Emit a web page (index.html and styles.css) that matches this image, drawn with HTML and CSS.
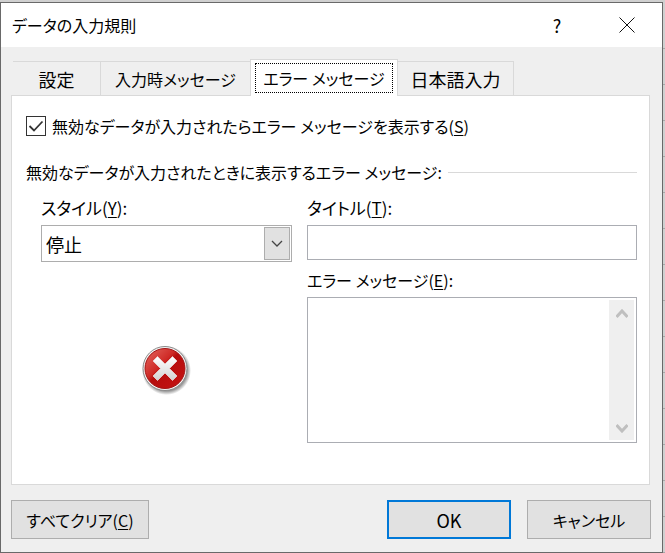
FILE: index.html
```html
<!DOCTYPE html>
<html lang="ja">
<head>
    <meta charset="UTF-8">
    <meta name="viewport" content="width=device-width, initial-scale=1.0">
    <title>データの入力規則</title>
    <link rel="stylesheet" href="styles.css">
</head>
<body>
    <div class="dialog" role="dialog" aria-labelledby="dialogTitle">
        <header class="titlebar">
            <h1 class="title" id="dialogTitle">データの入力規則</h1>
            <button type="button" class="title-button">?</button>
            <button type="button" class="title-button" aria-label="閉じる">
                <svg width="16" height="16" viewBox="0 0 16 16"><path d="M0.5 0.5L15.5 15.5M15.5 0.5L0.5 15.5" stroke="#111" fill="none"/></svg>
            </button>
        </header>
        <form class="content">
            <div class="tabs" role="tablist">
                <button type="button" class="tab tab-settings large" role="tab">設定</button>
                <button type="button" class="tab tab-input" role="tab">入力時メッセージ</button>
                <button type="button" class="tab tab-error selected" role="tab" aria-selected="true"><span class="focus">エラー メッセージ</span></button>
                <button type="button" class="tab tab-ime large" role="tab">日本語入力</button>
            </div>
            <div class="panel" role="tabpanel">
                <div class="check-row">
                    <span class="check">
                        <input type="checkbox" id="showError" checked>
                        <svg class="check-mark" width="20" height="20" viewBox="0 0 20 20"><path d="M3.5 10L8 14.5L16.5 5.5" stroke="#333" stroke-width="1.8" fill="none"/></svg>
                    </span>
                    <label for="showError">無効なデータが入力されたらエラー メッセージを表示する(<u>S</u>)</label>
                </div>
                <h2 class="group-title">無効なデータが入力されたときに表示するエラー メッセージ:</h2>
                <div class="columns">
                    <div class="column">
                        <label class="field-label" for="style">スタイル(<u>Y</u>):</label>
                        <div class="select-box">
                            <select class="large" id="style">
                                <option>停止</option>
                                <option>注意</option>
                                <option>情報</option>
                            </select>
                            <span class="select-arrow">
                                <svg width="12" height="8" viewBox="0 0 12 8"><path d="M1 1L6 6L11 1" stroke="#444" stroke-width="1.3" fill="none"/></svg>
                            </span>
                        </div>
                        <svg class="stop-icon" width="50" height="50" viewBox="0 0 50 50">
                            <defs>
                                <linearGradient id="red" x1="0" y1="0" x2="1" y2="1">
                                    <stop offset="0" stop-color="#e46a62"/>
                                    <stop offset="0.4" stop-color="#cf2a26"/>
                                    <stop offset="0.48" stop-color="#b50d0d"/>
                                    <stop offset="1" stop-color="#c81414"/>
                                </linearGradient>
                                <linearGradient id="cross" x1="0" y1="0" x2="0" y2="1">
                                    <stop offset="0" stop-color="#ffffff"/>
                                    <stop offset="1" stop-color="#d2d2d2"/>
                                </linearGradient>
                                <radialGradient id="shadow">
                                    <stop offset="0.84" stop-color="#555" stop-opacity="0.6"/>
                                    <stop offset="1" stop-color="#555" stop-opacity="0"/>
                                </radialGradient>
                            </defs>
                            <circle cx="24.5" cy="25.5" r="24.5" fill="url(#shadow)"/>
                            <circle cx="23" cy="23.5" r="22" fill="#f4f4f4" stroke="#8a8a8a"/>
                            <circle cx="23" cy="23.5" r="20" fill="url(#red)" stroke="#a31515"/>
                            <path d="M15.5 11.5L23 19L30.5 11.5L35 16L27.5 23.5L35 31L30.5 35.5L23 28L15.5 35.5L11 31L18.5 23.5L11 16Z" fill="url(#cross)" stroke="#e8d5d5" stroke-width="0.8" stroke-linejoin="round"/>
                        </svg>
                    </div>
                    <div class="column">
                        <label class="field-label" for="errorTitle">タイトル(<u>T</u>):</label>
                        <input type="text" id="errorTitle">
                        <label class="message-label" for="errorMessage">エラー メッセージ(<u>E</u>):</label>
                        <div class="message-box">
                            <textarea id="errorMessage"></textarea>
                            <div class="scrollbar">
                                <svg width="12" height="10" viewBox="0 0 12 10"><path d="M0.5 8L6 2L11.5 8" stroke="#bfbfbf" stroke-width="3" fill="none"/></svg>
                                <svg width="12" height="10" viewBox="0 0 12 10"><path d="M0.5 2L6 8L11.5 2" stroke="#bfbfbf" stroke-width="3" fill="none"/></svg>
                            </div>
                        </div>
                    </div>
                </div>
            </div>
            <footer class="buttons">
                <button type="button" class="button button-clear">すべてクリア(<u>C</u>)</button>
                <button type="submit" class="button button-ok large">OK</button>
                <button type="button" class="button">キャンセル</button>
            </footer>
        </form>
    </div>
</body>
</html>
```
FILE: styles.css
```css
* {
    box-sizing: border-box;
}
body {
    margin: 0;
    padding: 2px 2px 0 0;
    min-height: 100vh;
    /* sheet rows showing behind the dialog */
    background: repeating-linear-gradient(#d0d0d0 0 35px, #a8a8a8 35px 36px) 0 13px;
    color: #000;
    font: 16px/24px "Noto Sans CJK JP", sans-serif;
    font-feature-settings: "palt";
}
button, input, select, textarea {
    font: inherit;
    font-feature-settings: inherit;
    color: inherit;
    margin: 0;
    border-radius: 0;
}
u {
    text-decoration-thickness: 1px;
    text-underline-offset: 2px;
}
.large {
    font-size: 18px;
}
.dialog {
    border: 1px solid #696969;
    background-color: #efefef;
}
.titlebar {
    display: flex;
    align-items: center;
    height: 44px;
    padding-left: 11px;
    background-color: #fff;
}
.title {
    flex: 1;
    margin: 0;
    font-size: inherit;
    font-weight: inherit;
}
.title-button {
    display: flex;
    align-items: center;
    justify-content: center;
    width: 70px;
    height: 44px;
    padding: 0;
    border: none;
    background: none;
    font-size: 18px;
}
.content {
    padding: 12px 11px 13px 10px;
}
.tabs {
    display: flex;
    align-items: flex-end;
    padding-left: 2px;
}
.tab {
    height: 34px;
    padding: 0;
    border: 1px solid #d9d9d9;
    border-width: 1px 1px 0 0;
    background-color: #efefef;
    white-space: nowrap;
}
.tab-settings {
    width: 88px;
}
.tab-input {
    width: 149px;
    border-right: none;
}
.tab-error {
    width: 148px;
}
.tab-ime {
    width: 116px;
}
.selected {
    height: 37px;
    margin-bottom: -1px;
    padding: 3px 4px;
    border-left-width: 1px;
    background-color: #fff;
    z-index: 1;
}
.focus {
    display: block;
    border: 1px dotted #000;
    line-height: 28px;
}
.panel {
    margin-right: 1px;
    padding: 18px 12px 41px 14px;
    border: 1px solid #d9d9d9;
    background-color: #fff;
}
.check-row {
    display: flex;
    align-items: center;
    gap: 6px;
}
.check {
    display: flex;
    position: relative;
}
.check input {
    appearance: none;
    width: 20px;
    height: 20px;
    border: 1px solid #333;
    background-color: #fff;
}
.check-mark {
    position: absolute;
    top: 0;
    left: 0;
    visibility: hidden;
    pointer-events: none;
}
.check input:checked + .check-mark {
    visibility: visible;
}
.group-title {
    display: flex;
    align-items: center;
    gap: 6px;
    margin: 22px 0 12px;
    font-size: inherit;
    font-weight: inherit;
}
.group-title::after {
    content: "";
    flex: 1;
    height: 1px;
    background-color: #d9d9d9;
}
.columns {
    display: grid;
    grid-template-columns: 251fr 330fr;
    gap: 15px;
    margin-left: 15px;
}
.column {
    display: flex;
    flex-direction: column;
    min-width: 0;
}
.field-label {
    margin-bottom: 5px;
    font-size: 17px;
}
.select-box {
    position: relative;
    height: 37px;
}
.select-box select {
    appearance: none;
    width: 100%;
    height: 100%;
    padding: 0 30px 0 4px;
    border: 1px solid #adadad;
    background-color: #fff;
}
.select-arrow {
    position: absolute;
    top: 2px;
    right: 2px;
    bottom: 2px;
    display: flex;
    align-items: center;
    justify-content: center;
    width: 26px;
    border: 1px solid #adadad;
    background-color: #e1e1e1;
    pointer-events: none;
}
.stop-icon {
    align-self: center;
    margin-top: 83px;
}
#errorTitle {
    width: 100%;
    height: 35px;
    padding: 0 4px;
    border: 1px solid #abadb3;
}
.message-label {
    margin: 8px 0 5px;
}
.message-box {
    display: flex;
    height: 146px;
    padding: 2px;
    border: 1px solid #abadb3;
}
.message-box textarea {
    flex: 1;
    min-width: 0;
    padding: 2px;
    border: none;
    outline: none;
    resize: none;
}
.scrollbar {
    display: flex;
    flex-direction: column;
    align-items: center;
    justify-content: space-between;
    width: 25px;
    padding: 9px 0 7px;
    background-color: #efefef;
}
.buttons {
    display: flex;
    gap: 16px;
    margin-top: 15px;
}
.button {
    width: 124px;
    height: 39px;
    padding: 0;
    border: 1px solid #adadad;
    background-color: #e1e1e1;
}
.button-clear {
    width: 138px;
    margin-right: auto;
}
.button-ok {
    border: 2px solid #0078d7;
}
```
